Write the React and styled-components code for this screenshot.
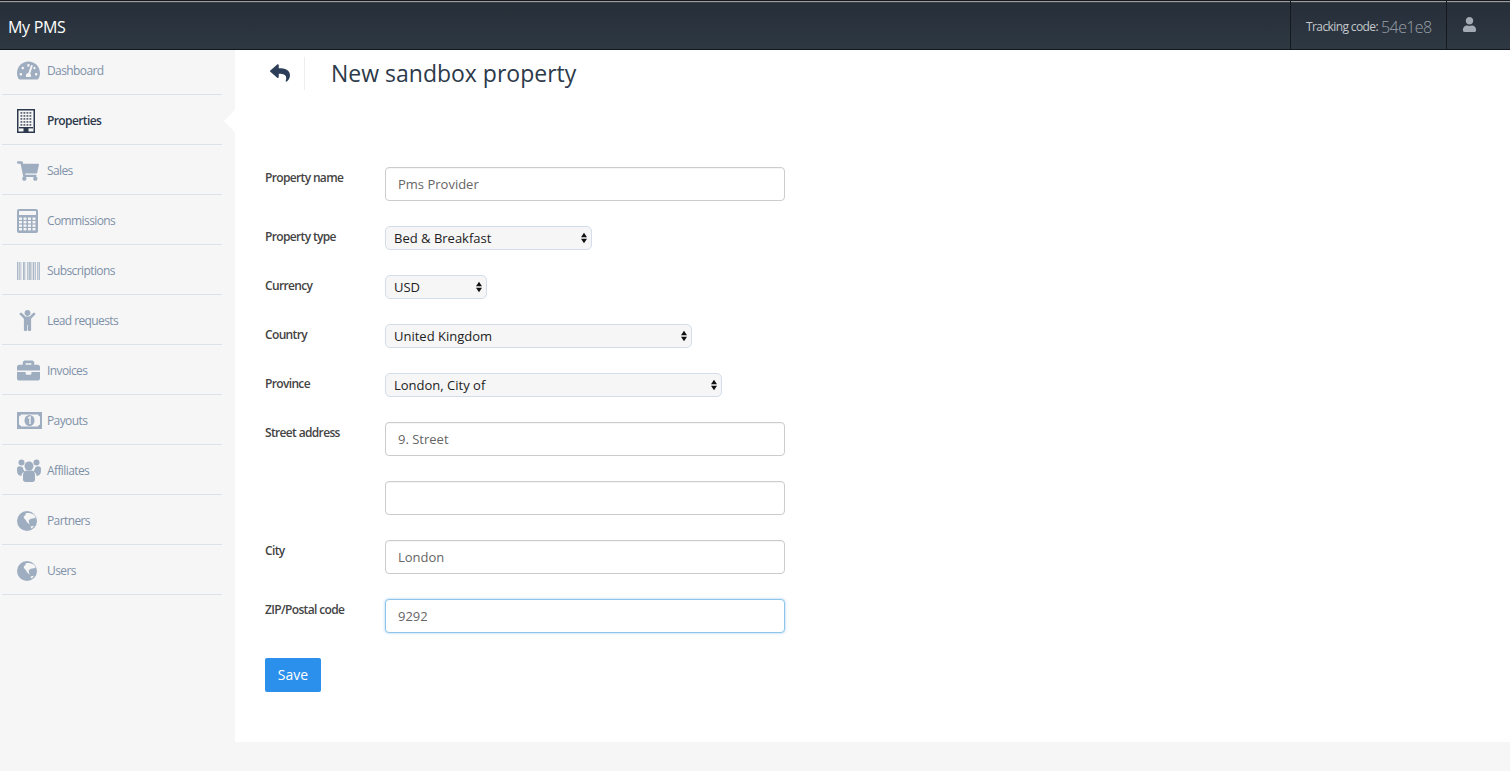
import React from "react";
import styled, { createGlobalStyle } from "styled-components";
import {
  FaTachometerAlt,
  FaShoppingCart,
  FaChild,
  FaBriefcase,
  FaUser,
  FaReply,
} from "react-icons/fa";

const GlobalStyle = createGlobalStyle`
  html, body {
    margin: 0;
    padding: 0;
    background: #f6f6f6;
    font-family: "Open Sans", sans-serif;
  }
  * {
    box-sizing: border-box;
  }
`;

const Page = styled.div`
  display: flex;
  flex-direction: column;
  width: 1510px;
  height: 771px;
  overflow: hidden;
  background: #f6f6f6;
`;

const TopBar = styled.header`
  display: flex;
  align-items: stretch;
  justify-content: space-between;
  height: 50px;
  padding-top: 3px;
  background: linear-gradient(#262e38, #2e3843);
  border-top: 1px solid #15191e;
  border-bottom: 1px solid #14181d;
  box-shadow: inset 0 1px 0 #9a9da1, inset 0 2px 0 #3a3f46;
`;

const Brand = styled.div`
  display: flex;
  align-items: center;
  padding-left: 8px;
  color: #ffffff;
  font-size: 16px;
  font-weight: 400;
  letter-spacing: -0.3px;
`;

const TopRight = styled.div`
  display: flex;
  align-items: stretch;
  margin-top: -3px;
`;

const TopCell = styled.div`
  display: flex;
  align-items: center;
  width: ${(props) => props.width}px;
  padding: 3px 0 0 ${(props) => props.pad}px;
  border-left: 1px solid #15191e;
  color: #c4c8cc;
`;

const TrackingLabel = styled.span`
  font-size: 12px;
  letter-spacing: -0.6px;
  margin-right: 3px;
`;

const TrackingCode = styled.span`
  font-size: 16px;
  font-weight: 300;
  letter-spacing: -0.6px;
  color: #9aa0a7;
`;

const UserIcon = styled(FaUser)`
  margin-top: -5px;
  color: #a3aab3;
`;

const Body = styled.div`
  display: flex;
  flex: 1;
`;

const Sidebar = styled.nav`
  display: flex;
  flex-direction: column;
  width: 235px;
  padding-left: 2px;
`;

const NavItem = styled.div`
  position: relative;
  display: flex;
  align-items: center;
  width: 220px;
  height: 50px;
  padding: 2px 0 0 15px;
  border-bottom: 1px solid #dbe2ea;
  color: ${(props) => (props.active ? "#2d3a4d" : "#7f91a8")};
  font-size: 12px;
  font-weight: ${(props) => (props.active ? 600 : 400)};
  letter-spacing: -0.6px;

  &:first-child {
    height: 45px;
    padding-top: 0;
    padding-bottom: 4px;
  }
`;

const NavIcon = styled.span`
  display: flex;
  align-items: center;
  justify-content: flex-start;
  width: 30px;
  font-size: 22px;
  color: ${(props) => (props.active ? "#2d3a4d" : "#9eadc0")};
`;

const ActiveArrow = styled.span`
  position: absolute;
  left: 222px;
  top: 15px;
  width: 0;
  height: 0;
  border-top: 11px solid transparent;
  border-bottom: 11px solid transparent;
  border-right: 11px solid #ffffff;
`;

const Main = styled.main`
  flex: 1;
  height: 692px;
  padding-left: 30px;
  background: #ffffff;
`;

const TitleRow = styled.div`
  display: flex;
  align-items: center;
  height: 117px;
  padding-bottom: 71px;
`;

const BackButton = styled.div`
  display: flex;
  align-items: center;
  width: 40px;
  height: 33px;
  padding-left: 5px;
  border-right: 1px solid #eeeeee;
  color: #2d3f58;
`;

const Title = styled.h1`
  margin: 0 0 0 26px;
  color: #2d3a4a;
  font-size: 23px;
  font-weight: 400;
  letter-spacing: 0;
`;

const Form = styled.form`
  display: flex;
  flex-direction: column;
  gap: 25px;
`;

const Row = styled.div`
  display: grid;
  grid-template-columns: 120px 1fr;
  align-items: start;
`;

const Label = styled.label`
  padding-top: 2px;
  color: #444444;
  font-size: 12px;
  font-weight: 600;
  line-height: 17px;
  letter-spacing: -0.65px;
`;

const TextInput = styled.input`
  display: block;
  width: 400px;
  height: 34px;
  padding: 0 12px;
  border: 1px solid ${(props) => (props.focused ? "#8ec3ea" : "#cccccc")};
  border-radius: 4px;
  background: #ffffff;
  box-shadow: ${(props) =>
    props.focused ? "0 0 3px rgba(102, 175, 233, 0.6)" : "inset 0 1px 1px rgba(0,0,0,0.04)"};
  color: #666666;
  font-family: "Open Sans", sans-serif;
  font-size: 13px;
  letter-spacing: 0;
  outline: none;
`;

const SelectWrap = styled.div`
  position: relative;
  width: ${(props) => props.width}px;
  height: 24px;
`;

const Select = styled.select`
  display: block;
  width: 100%;
  height: 100%;
  padding: 0 8px;
  border: 1px solid #d3deea;
  border-radius: 5px;
  background: #f6f6f6;
  appearance: none;
  color: #222222;
  font-family: "Open Sans", sans-serif;
  font-size: 13px;
  letter-spacing: 0;
  outline: none;
`;

const SelectArrows = styled.svg`
  position: absolute;
  right: 5px;
  top: 6px;
  width: 6px;
  height: 12px;
  pointer-events: none;
`;

const SaveButton = styled.button`
  align-self: flex-start;
  width: 56px;
  height: 34px;
  padding: 0 0 2px;
  border: none;
  border-radius: 2px;
  background: #2b90ec;
  color: #ffffff;
  font-family: "Open Sans", sans-serif;
  font-size: 14px;
`;

const BuildingIcon = () => (
  <svg width="18" height="24" viewBox="0 0 18 24">
    <rect x="0.75" y="0.75" width="16.5" height="22.5" fill="none" stroke="currentColor" strokeWidth="1.5" />
    <g fill="currentColor" opacity="0.75">
      {[3, 6, 9, 12, 15].map((y) =>
        [3.5, 6.5, 9.5, 12.5].map((x) => <rect key={`${x}-${y}`} x={x} y={y} width="1.8" height="1.8" />)
      )}
    </g>
    <rect x="6.5" y="19" width="5" height="4" fill="currentColor" />
    <rect x="2" y="18" width="14" height="1.4" fill="currentColor" />
  </svg>
);

const CalculatorIcon = () => (
  <svg width="21" height="24" viewBox="0 0 21 24">
    <rect width="21" height="24" rx="2" fill="currentColor" />
    <rect x="2" y="2" width="17" height="4" fill="#f6f6f6" />
    {[8.5, 12, 15.5, 19].map((y) =>
      [2, 6.5, 11, 15.5].map((x) => <rect key={`${x}-${y}`} x={x} y={y} width="3" height="2.4" fill="#f6f6f6" />)
    )}
  </svg>
);

const BarcodeIcon = () => (
  <svg width="23" height="18" viewBox="0 0 23 18" fill="currentColor">
    {[0, 2, 3.5, 6, 7.5, 10, 11.5, 13, 14.5, 16, 18, 20, 21.5].map((x, i) => (
      <rect key={x} x={x} width={i % 3 === 0 ? 1.4 : 0.8} height="18" opacity="0.85" />
    ))}
  </svg>
);

const MoneyIcon = () => (
  <svg width="25" height="17" viewBox="0 0 25 17">
    <rect width="25" height="17" fill="currentColor" />
    <path d="M4 2.5h17a2.5 2.5 0 0 0 2 2v8a2.5 2.5 0 0 0-2 2H4a2.5 2.5 0 0 0-2-2v-8a2.5 2.5 0 0 0 2-2z" fill="#f6f6f6" />
    <ellipse cx="12.5" cy="8.5" rx="5" ry="5.6" fill="currentColor" />
    <path d="M11 6.2l2-1.2v7" fill="none" stroke="#f6f6f6" strokeWidth="1.4" />
  </svg>
);

const AffiliatesIcon = () => (
  <svg width="24" height="23" viewBox="0 0 24 23" fill="currentColor">
    <circle cx="4.5" cy="3.5" r="3" />
    <circle cx="19.5" cy="3.5" r="3" />
    <circle cx="12" cy="7" r="4.5" />
    <circle cx="2.8" cy="10" r="2.8" />
    <circle cx="21.2" cy="10" r="2.8" />
    <path d="M0 11.5C1 8.5 3 8 5.5 8 6 10 7 11.5 8 12.5 5.5 13 4.5 15 4.5 17 1.5 16.5 0 15 0 11.5zM24 11.5C23 8.5 21 8 18.5 8 18 10 17 11.5 16 12.5 18.5 13 19.5 15 19.5 17 22.5 16.5 24 15 24 11.5z" />
    <path d="M6 16c0-3 2-4.5 3.5-4.5h5c1.5 0 3.5 1.5 3.5 4.5v4.5c0 1.5-1 2.5-2.5 2.5h-7C7 23 6 22 6 20.5z" />
  </svg>
);

const GlobeIcon = () => (
  <svg width="20" height="20" viewBox="0 0 20 20">
    <circle cx="10" cy="10" r="10" fill="currentColor" />
    <path
      d="M8.7 2.2C11 1.6 14.5 2 16.7 3.6 18 5 18.6 6 18.5 7 16 7.2 14 7.6 12.8 8.4 11.5 9 11.4 10 12.8 13.4 10.8 12.4 9.5 10.5 8.8 9 7.5 8 6.5 6.5 6.8 5.2 8 4.8 9 3.8 8.7 2.2zM13.5 15.5L17 14.8C16.4 16 15.4 17 14.2 17.6z"
      fill="#f6f6f6"
    />
  </svg>
);

const navItems = [
  { label: "Dashboard", icon: <FaTachometerAlt size={23} /> },
  { label: "Properties", icon: <BuildingIcon />, active: true },
  { label: "Sales", icon: <FaShoppingCart size={22} /> },
  { label: "Commissions", icon: <CalculatorIcon /> },
  { label: "Subscriptions", icon: <BarcodeIcon /> },
  { label: "Lead requests", icon: <FaChild size={21} /> },
  { label: "Invoices", icon: <FaBriefcase size={23} /> },
  { label: "Payouts", icon: <MoneyIcon /> },
  { label: "Affiliates", icon: <AffiliatesIcon /> },
  { label: "Partners", icon: <GlobeIcon /> },
  { label: "Users", icon: <GlobeIcon /> },
];

const SelectField = ({ width, value }) => (
  <SelectWrap width={width}>
    <Select defaultValue={value}>
      <option>{value}</option>
    </Select>
    <SelectArrows viewBox="0 0 7 12">
      <path d="M3.5 0L7 5H0zM3.5 12L0 7h7z" fill="#111111" />
    </SelectArrows>
  </SelectWrap>
);

export default function App() {
  return (
    <Page>
      <GlobalStyle />
      <TopBar>
        <Brand>My PMS</Brand>
        <TopRight>
          <TopCell width={156} pad={15}>
            <TrackingLabel>Tracking code:</TrackingLabel>
            <TrackingCode>54e1e8</TrackingCode>
          </TopCell>
          <TopCell width={64} pad={15}>
            <UserIcon size={15} />
          </TopCell>
        </TopRight>
      </TopBar>
      <Body>
        <Sidebar>
          {navItems.map((item) => (
            <NavItem key={item.label} active={item.active}>
              <NavIcon active={item.active}>{item.icon}</NavIcon>
              {item.label}
              {item.active && <ActiveArrow />}
            </NavItem>
          ))}
        </Sidebar>
        <Main>
          <TitleRow>
            <BackButton>
              <FaReply size={20} />
            </BackButton>
            <Title>New sandbox property</Title>
          </TitleRow>
          <Form>
            <Row>
              <Label>Property name</Label>
              <TextInput defaultValue="Pms Provider" />
            </Row>
            <Row>
              <Label>Property type</Label>
              <SelectField width={207} value="Bed & Breakfast" />
            </Row>
            <Row>
              <Label>Currency</Label>
              <SelectField width={102} value="USD" />
            </Row>
            <Row>
              <Label>Country</Label>
              <SelectField width={307} value="United Kingdom" />
            </Row>
            <Row>
              <Label>Province</Label>
              <SelectField width={337} value="London, City of" />
            </Row>
            <Row>
              <Label>Street address</Label>
              <TextInput defaultValue="9. Street" />
            </Row>
            <Row>
              <Label />
              <TextInput defaultValue="" />
            </Row>
            <Row>
              <Label>City</Label>
              <TextInput defaultValue="London" />
            </Row>
            <Row>
              <Label>ZIP/Postal code</Label>
              <TextInput defaultValue="9292" focused />
            </Row>
            <SaveButton type="button">Save</SaveButton>
          </Form>
        </Main>
      </Body>
    </Page>
  );
}
